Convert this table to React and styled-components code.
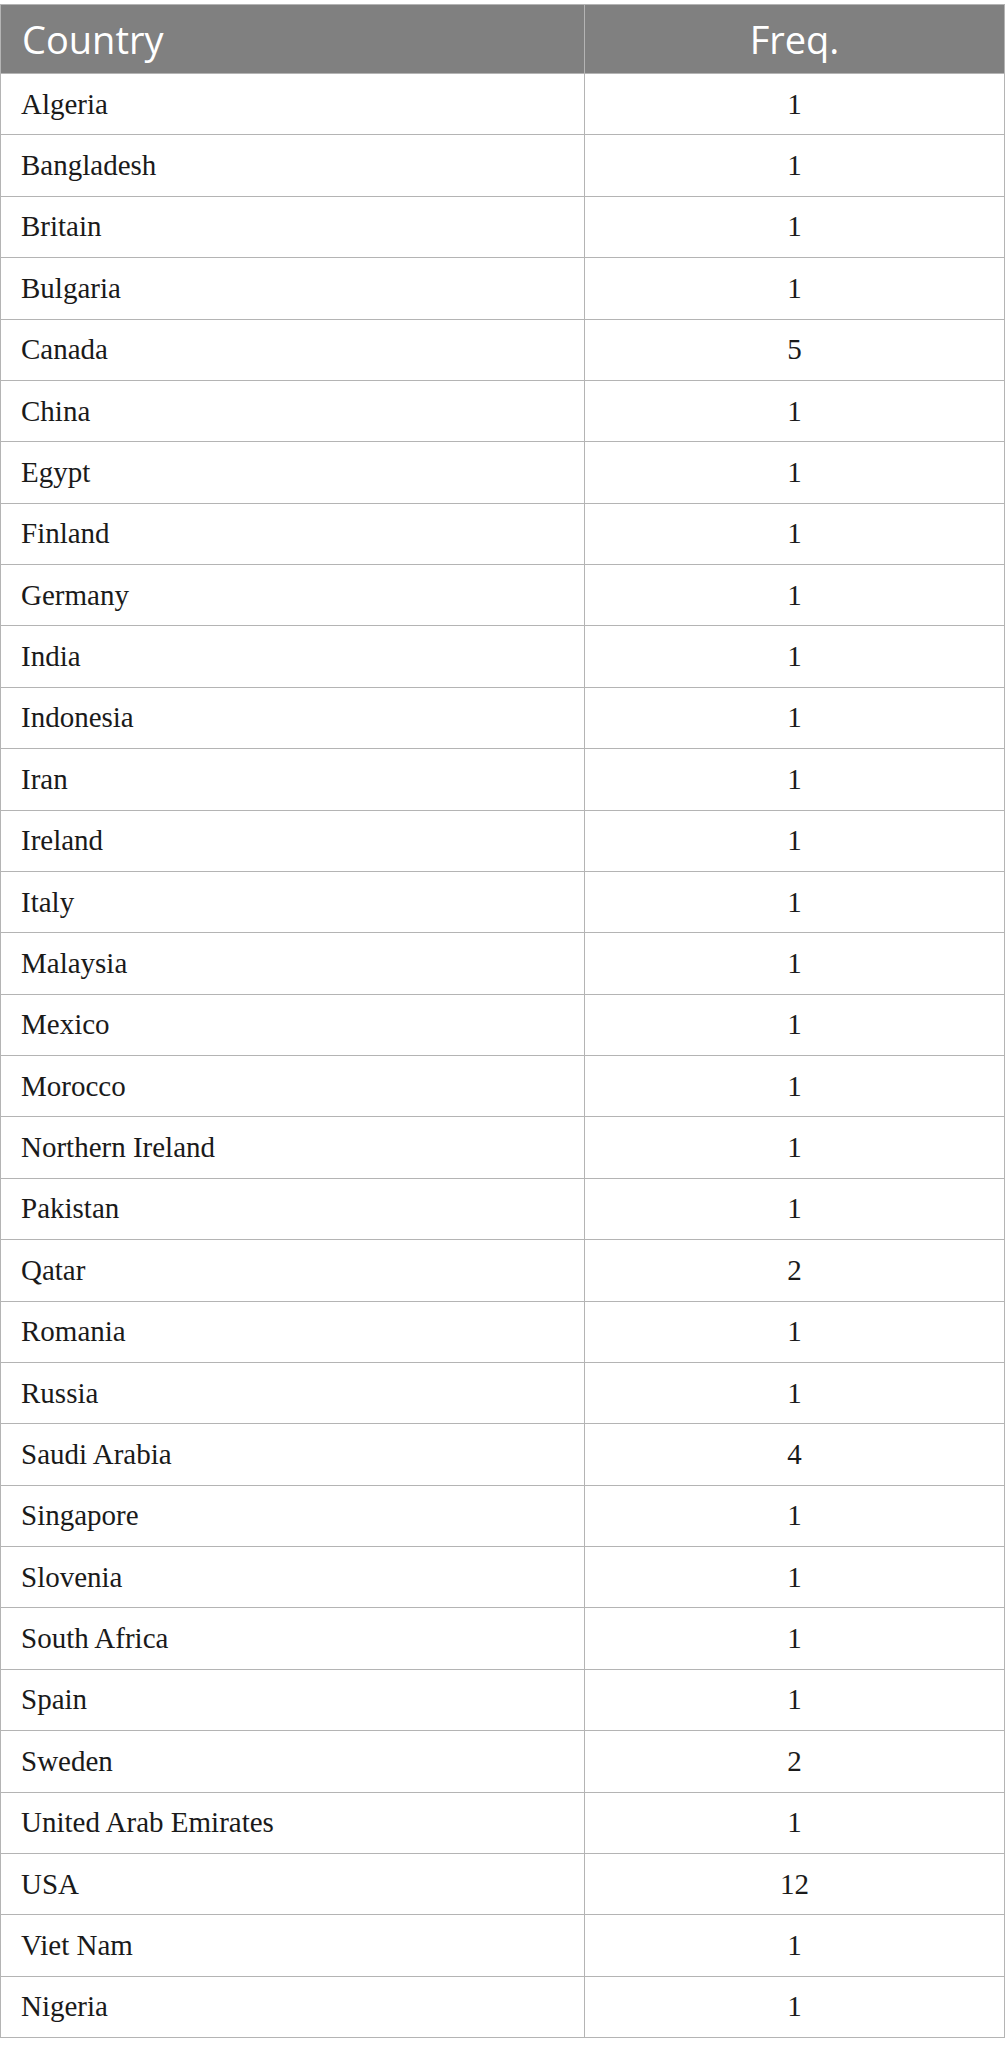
import React from "react";
import styled, { createGlobalStyle } from "styled-components";

const Global = createGlobalStyle`
  html, body { margin: 0; padding: 0; background: #ffffff; }
  body { font-family: "Liberation Serif", "Times New Roman", serif; }
`;

const Table = styled.table`
  width: 1005px;
  margin-top: 4px;
  border-collapse: collapse;
  table-layout: fixed;
  border: 1px solid #b4b4b4;
`;

const HeadRow = styled.tr`
  height: 69px;
  background: #808080;
`;

const HeadCell = styled.th`
  padding: 0 0 0 ${(p) => (p.$center ? "0" : "21px")};
  text-align: ${(p) => (p.$center ? "center" : "left")};
  font-family: "Open Sans", "Liberation Sans", sans-serif;
  font-weight: 400;
  font-size: 38px;
  color: #ffffff;
  border-right: 1px solid #b4b4b4;
  vertical-align: middle;
  line-height: 1;
`;

const Row = styled.tr`
  height: 61.375px;
`;

const Cell = styled.td`
  padding: 0 0 0 ${(p) => (p.$center ? "0" : "20px")};
  text-align: ${(p) => (p.$center ? "center" : "left")};
  font-family: "Liberation Serif", "Times New Roman", serif;
  font-size: 29px;
  color: #1a1a1a;
  border: 1px solid #b4b4b4;
  vertical-align: middle;
  line-height: 1;
`;

const data = [
  ["Algeria", 1],
  ["Bangladesh", 1],
  ["Britain", 1],
  ["Bulgaria", 1],
  ["Canada", 5],
  ["China", 1],
  ["Egypt", 1],
  ["Finland", 1],
  ["Germany", 1],
  ["India", 1],
  ["Indonesia", 1],
  ["Iran", 1],
  ["Ireland", 1],
  ["Italy", 1],
  ["Malaysia", 1],
  ["Mexico", 1],
  ["Morocco", 1],
  ["Northern Ireland", 1],
  ["Pakistan", 1],
  ["Qatar", 2],
  ["Romania", 1],
  ["Russia", 1],
  ["Saudi Arabia", 4],
  ["Singapore", 1],
  ["Slovenia", 1],
  ["South Africa", 1],
  ["Spain", 1],
  ["Sweden", 2],
  ["United Arab Emirates", 1],
  ["USA", 12],
  ["Viet Nam", 1],
  ["Nigeria", 1],
];

export default function App() {
  return (
    <>
      <Global />
      <Table>
        <colgroup>
          <col style={{ width: 584 }} />
          <col />
        </colgroup>
        <thead>
          <HeadRow>
            <HeadCell>Country</HeadCell>
            <HeadCell $center>Freq.</HeadCell>
          </HeadRow>
        </thead>
        <tbody>
          {data.map(([c, f]) => (
            <Row key={c}>
              <Cell>{c}</Cell>
              <Cell $center>{f}</Cell>
            </Row>
          ))}
        </tbody>
      </Table>
    </>
  );
}
